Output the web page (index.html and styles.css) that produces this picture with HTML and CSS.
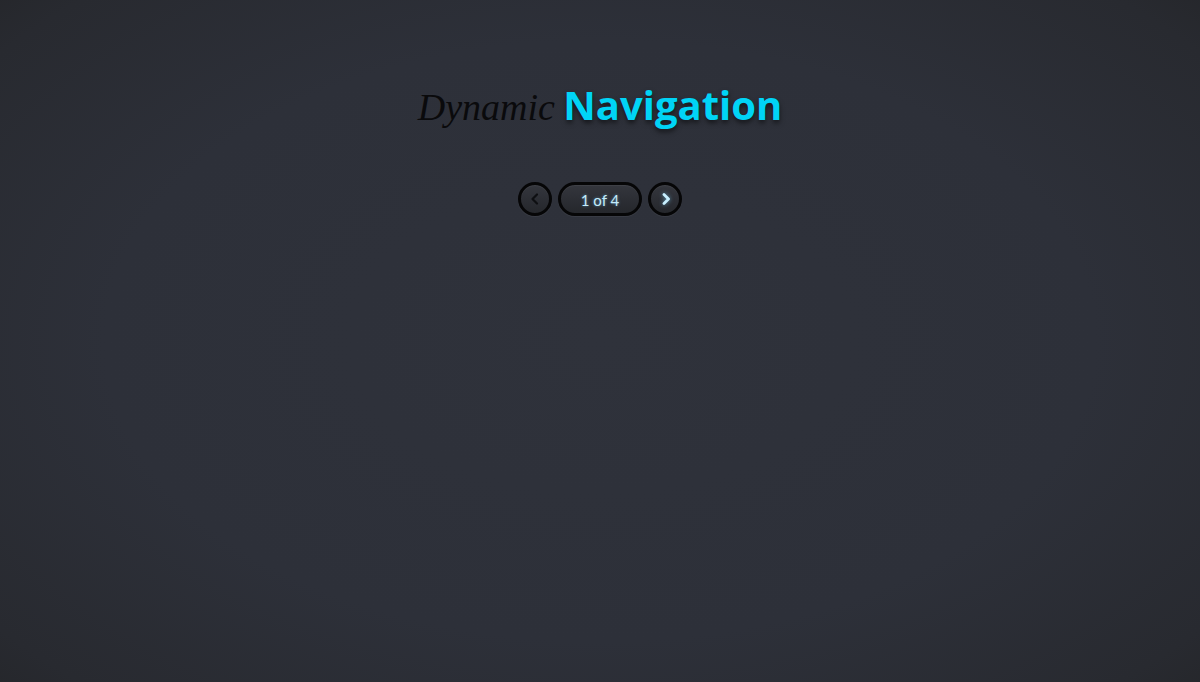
FILE: index.html
```html
<!DOCTYPE html>
<html>
<head>
<meta charset="utf-8">
<link rel="stylesheet" href="styles.css">
</head>
<body>
<div class="page">
  <h1 class="title"><span class="dyn">Dynamic</span> <span class="nav">Navigation</span></h1>
  <div class="pager">
    <button class="circle prev" aria-label="Previous">
      <svg width="12" height="14" viewBox="0 0 12 14"><path d="M8 2.5 L3.5 7 L8 11.5" fill="none" stroke="#0e0f12" stroke-width="2.2" stroke-linecap="round" stroke-linejoin="round"/></svg>
    </button>
    <div class="count">1 of 4</div>
    <button class="circle next" aria-label="Next">
      <svg width="12" height="14" viewBox="0 0 12 14"><path d="M4 2.5 L8.5 7 L4 11.5" fill="none" stroke="#c8efff" stroke-width="2.8" stroke-linecap="round" stroke-linejoin="round"/></svg>
    </button>
  </div>
</div>
</body>
</html>
```
FILE: styles.css
```css
html, body {
  margin: 0;
  height: 100%;
}
body {
  background: radial-gradient(ellipse 75% 80% at 50% 50%, #2f323b 0%, #2d3039 55%, #282a30 85%, #232427 100%);
  font-family: "Open Sans", sans-serif;
  overflow: hidden;
}
.page {
  display: flex;
  flex-direction: column;
  align-items: center;
  padding-top: 75px;
}
.title {
  margin: 0;
  line-height: 60px;
  font-weight: normal;
  white-space: nowrap;
}
.dyn {
  font-family: "Liberation Serif", serif;
  font-style: italic;
  font-size: 38px;
  color: #0a0a0c;
}
.nav {
  font-family: "Open Sans", sans-serif;
  font-weight: 700;
  font-size: 40px;
  color: #00d4f6;
  text-shadow: 0 3px 5px rgba(0,0,0,0.55);
}
.pager {
  display: flex;
  gap: 6px;
  margin-top: 44px;
}
.circle, .count {
  box-sizing: border-box;
  height: 34px;
  border: 3px solid #060607;
  background: linear-gradient(#34363d, #25272c);
  box-shadow: 0 1px 1px rgba(255,255,255,0.06), inset 0 1px 1px rgba(255,255,255,0.06);
}
.circle {
  width: 34px;
  border-radius: 50%;
  padding: 0;
  display: flex;
  align-items: center;
  justify-content: center;
  cursor: pointer;
}
.prev svg { margin-left: -1px; }
.next svg { margin-left: 1px; margin-top: -1px; filter: drop-shadow(0 0 2px rgba(120,210,255,0.6)); }
.count {
  width: 84px;
  border-radius: 17px;
  display: flex;
  align-items: center;
  justify-content: center;
  font-family: Lato, "Open Sans", sans-serif;
  font-size: 15px;
  font-weight: 400;
  color: #c4ecfb;
  text-shadow: 0 0 3px rgba(120,200,255,0.6);
  padding-top: 1px;
}
```
